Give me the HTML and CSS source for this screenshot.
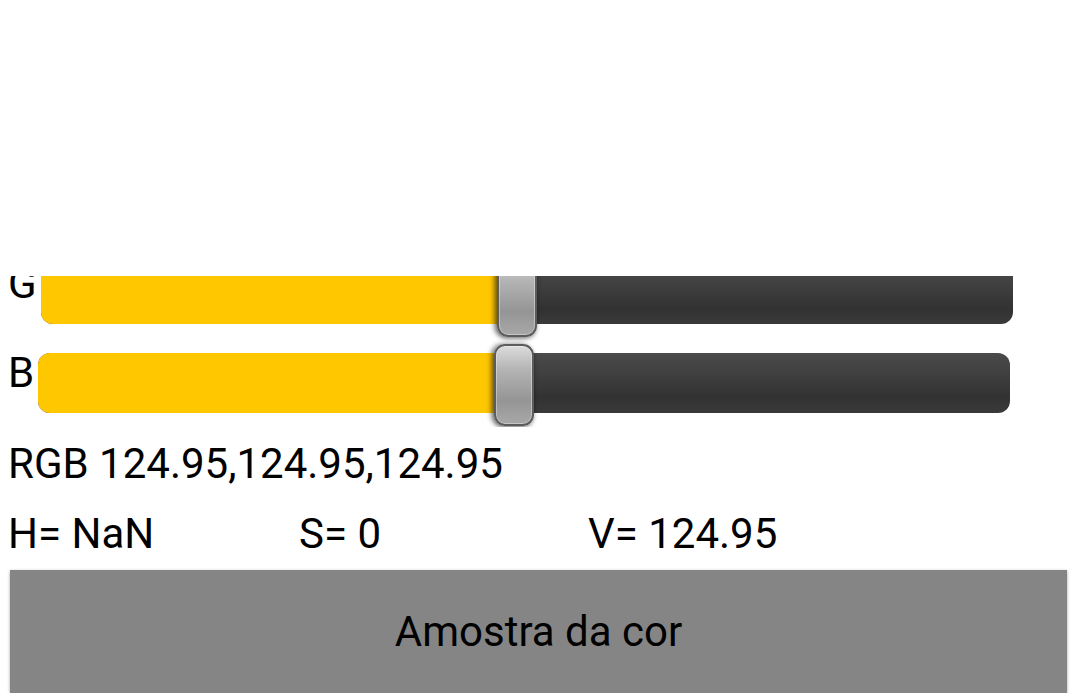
FILE: index.html
```html
<!DOCTYPE html>
<html lang="pt">
<head>
  <meta charset="UTF-8">
  <title>Amostra da cor</title>
  <link rel="stylesheet" href="styles.css">
</head>
<body>
  <div class="preview"></div>

  <div class="sliders">
    <div class="row first">
      <span class="label">G</span>
      <div class="track">
        <div class="fill" style="width: 49%;"></div>
        <div class="thumb" style="left: 49%;"></div>
      </div>
    </div>
    <div class="row">
      <span class="label">B</span>
      <div class="track">
        <div class="fill" style="width: 49%;"></div>
        <div class="thumb" style="left: 49%;"></div>
      </div>
    </div>
  </div>

  <div class="info">RGB 124.95,124.95,124.95</div>
  <div class="info hsv">
    <span>H= NaN</span>
    <span>S= 0</span>
    <span>V= 124.95</span>
  </div>

  <div class="sample">Amostra da cor</div>
</body>
</html>
```

FILE: styles.css
```css
body {
  margin: 0;
  background: #fff;
  color: #000;
  font-family: Roboto, "Noto Sans", sans-serif;
  font-size: 42px;
  overflow: hidden;
}
.preview {
  height: 276px;
}
.sliders {
  overflow: hidden;
  padding-bottom: 14px;
}
.row {
  display: flex;
  height: 60px;
  margin-top: 29px;
  padding-left: 8px;
}
.row.first {
  margin-top: -12px;
}
.label {
  line-height: 40px;
}
.track {
  position: relative;
  width: 972px;
  height: 60px;
  margin-left: 4px;
  border-radius: 12px;
  background: linear-gradient(#4b4b4b, #3c3c3c 45%, #323232 75%, #3a3a3a);
}
.fill {
  height: 100%;
  border-radius: 12px 0 0 12px;
  background: #fec700;
}
.thumb {
  position: absolute;
  top: -9px;
  width: 36px;
  height: 78px;
  margin-left: -20px;
  border: 2px solid #5c5c5c;
  border-radius: 11px;
  background: linear-gradient(#dcdcdc, #b4b4b4 30%, #959595 70%, #a8a8a8);
  box-shadow: inset 0 0 0 1px rgba(255, 255, 255, 0.35), -3px 0 5px rgba(0, 0, 0, 0.45), 0 2px 4px rgba(0, 0, 0, 0.3);
}
.info {
  line-height: 70px;
  padding-left: 8px;
}
.sliders + .info {
  margin-top: 2px;
}
.hsv {
  display: grid;
  grid-template-columns: 291px 289px auto;
}
.sample {
  width: 1057px;
  height: 123px;
  margin-top: 1px;
  margin-left: 10px;
  background: #858585;
  box-shadow: 0 1px 3px rgba(0, 0, 0, 0.35);
  display: flex;
  align-items: center;
  justify-content: center;
}
```
